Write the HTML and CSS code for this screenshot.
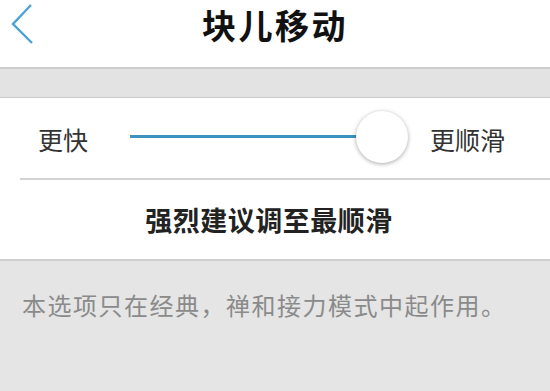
FILE: index.html
```html
<!DOCTYPE html>
<html lang="zh">
<head>
    <meta charset="UTF-8">
    <meta name="viewport" content="width=device-width, initial-scale=1.0">
    <title>块儿移动</title>
    <link rel="stylesheet" href="styles.css">
</head>
<body>

    <header class="topbar">
        <a href="#" class="back">
            <svg width="26" height="42" viewBox="0 0 26 42">
                <path d="M22 3 L4 22 L23 41" fill="none" stroke="#4aa3d6" stroke-width="2.4"/>
            </svg>
        </a>
        <h1>块儿移动</h1>
    </header>

    <div class="band"></div>

    <section class="panel">
        <div class="slider-row">
            <span class="label">更快</span>
            <div class="slider">
                <div class="track"></div>
                <div class="thumb"></div>
            </div>
            <span class="label">更顺滑</span>
        </div>
        <div class="hint">强烈建议调至最顺滑</div>
    </section>

    <p class="note">本选项只在经典，禅和接力模式中起作用。</p>

</body>
</html>
```

FILE: styles.css
```css
body {
    font-family: "Noto Sans CJK SC", "Noto Sans", sans-serif;
    margin: 0;
    padding: 0;
    background-color: #e5e5e5;
    height: 391px;
    overflow: hidden;
}

.topbar {
    height: 67px;
    background-color: #fff;
    border-bottom: 2px solid #cdcdcd;
    display: flex;
    align-items: flex-start;
    justify-content: center;
    position: relative;
}

.back {
    position: absolute;
    left: 9px;
    top: 2px;
}

h1 {
    margin: 0;
    font-size: 34px;
    line-height: 50px;
    font-weight: 700;
    letter-spacing: 2.5px;
    color: #111;
}

.band {
    height: 28px;
    background-color: #e3e3e3;
    border-bottom: 1px solid #cacaca;
}

.panel {
    background-color: #fff;
    border-bottom: 2px solid #cfcfcf;
}

.slider-row {
    height: 80px;
    margin-left: 20px;
    padding: 0 0 0 18px;
    display: flex;
    align-items: center;
    border-bottom: 2px solid #d3d3d3;
}

.label {
    font-size: 25px;
    color: #333;
    margin-top: 2px;
}

.slider {
    width: 278px;
    height: 56px;
    margin: 0 22px 0 42px;
    position: relative;
    display: flex;
    align-items: center;
}

.track {
    width: 227px;
    height: 3px;
    background-color: #3d92bf;
    margin-top: -4px;
}

.thumb {
    position: absolute;
    left: 226px;
    top: 1px;
    width: 52px;
    height: 52px;
    border-radius: 50%;
    background-color: #fff;
    box-shadow: 0 1px 4px rgba(0, 0, 0, 0.35);
}

.hint {
    height: 79px;
    display: flex;
    align-items: center;
    justify-content: center;
    padding-right: 12px;
    font-size: 27px;
    font-weight: 700;
    color: #222;
    letter-spacing: 0.5px;
}

.note {
    margin: 26px 0 0 22px;
    font-size: 24px;
    color: #8a8a8a;
    letter-spacing: 1.5px;
}
```
